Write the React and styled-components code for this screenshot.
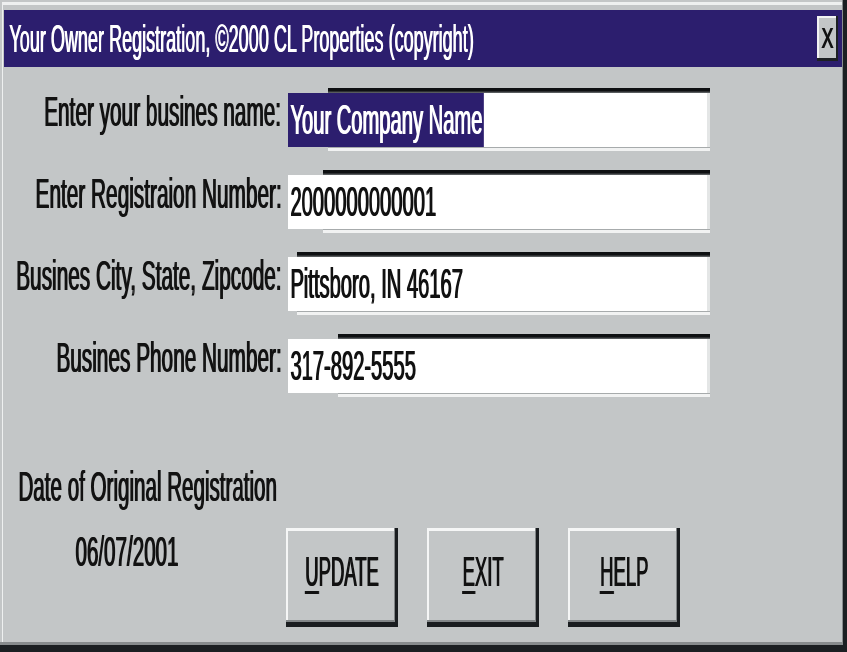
import React from 'react';
import styled, { createGlobalStyle } from 'styled-components';

const GlobalStyle = createGlobalStyle`
  html, body {
    margin: 0;
    padding: 0;
    background: #c3c6c7;
    font-family: "Liberation Sans", Arial, sans-serif;
  }
`;

const Window = styled.div`
  width: 847px;
  height: 652px;
  box-sizing: border-box;
  padding: 10px 5px 0 4px;
  background: #c3c6c7;
  box-shadow:
    inset -4px -7px 0 #1b1f22,
    inset -5px -10px 0 #878b8d,
    inset 2px 2px 0 #c3c6c7,
    inset 3px 5px 0 #eef0f0;
  overflow: hidden;
`;

const TitleBar = styled.div`
  height: 57px;
  background: #2c1e6e;
  display: flex;
  align-items: center;
  padding: 0 4px 0 5px;
`;

const TitleText = styled.span`
  flex: 1;
  min-width: 0;
  color: #fff;
  font-size: 38px;
  line-height: 1;
  white-space: nowrap;
  text-shadow: 1.5px 0 0 #fff;
  transform: scaleX(0.475);
  transform-origin: left center;
`;

const CloseButton = styled.button`
  width: 21px;
  height: 45px;
  padding: 0 0 2px 0;
  border: none;
  background: #c3c6c7;
  box-shadow:
    inset -2px -3px 0 #1e2124,
    inset 2px 2px 0 #f2f3f3;
  display: flex;
  align-items: center;
  justify-content: center;
  font-family: "Liberation Sans", Arial, sans-serif;
  font-size: 30px;
  line-height: 1;
  color: #111;
`;

const CloseGlyph = styled.span`
  display: inline-block;
  text-shadow: 1.5px 0 0 #111;
  transform: scaleX(0.6);
`;

const Form = styled.div`
  display: grid;
  grid-template-columns: 277px 419px;
  column-gap: 7px;
  row-gap: 18px;
  padding-top: 21px;
`;

const LabelCell = styled.div`
  display: flex;
  justify-content: flex-end;
  align-items: center;
  padding-bottom: 16px;
`;

const LabelText = styled.span`
  display: inline-block;
  white-space: nowrap;
  color: #121212;
  font-size: 42px;
  line-height: 1;
  text-shadow: 2px 0 0 #121212;
  transform: scaleX(0.495);
  transform-origin: right center;
`;

const Field = styled.div`
  position: relative;
  height: 54px;
  margin: 5px 0;
  background: #fff;
  box-shadow: 3px 0 0 #e4e6e6;

  &::before {
    content: '';
    position: absolute;
    left: ${p => p.$cut}px;
    right: -3px;
    top: -5px;
    height: 5px;
    background: linear-gradient(#0e1012 0 55%, #6d7173);
  }

  &::after {
    content: '';
    position: absolute;
    left: ${p => p.$cut}px;
    right: -3px;
    bottom: -5px;
    height: 5px;
    background: linear-gradient(#a7abac 0 1px, #f1f2f2 1px 4px, #c3c6c7 4px);
  }
`;

const FieldText = styled.div`
  padding-left: 4px;
  height: 54px;
  white-space: nowrap;
  color: #111;
  font-size: 42px;
  line-height: 54px;
  text-shadow: 2px 0 0 currentColor;
  transform: scaleX(0.48);
  transform-origin: left center;
`;

const Selection = styled.span`
  display: inline-block;
  margin-left: -4px;
  padding: 0 4px;
  background: #2c1e6e;
  color: #fff;
`;

const Footer = styled.div`
  display: flex;
  align-items: flex-start;
  padding-top: 67px;
`;

const DateBlock = styled.div`
  width: 282px;
  display: flex;
  flex-direction: column;
  gap: 21px;
`;

const DateText = styled.div`
  margin-left: ${p => p.$indent}px;
  height: 44px;
  white-space: nowrap;
  color: #121212;
  font-size: 42px;
  line-height: 44px;
  text-shadow: 2px 0 0 #121212;
  transform: scaleX(0.49);
  transform-origin: left center;
`;

const ButtonRow = styled.div`
  display: flex;
  gap: 29px;
  margin-top: 63px;
`;

const PushButton = styled.button`
  width: 112px;
  height: 99px;
  padding: 0 0 12px 0;
  border: none;
  background: #c3c6c7;
  box-shadow:
    inset -3px -5px 0 #1a1d20,
    inset -4px -7px 0 #828688,
    inset 2px 3px 0 #f5f6f6;
  display: flex;
  align-items: center;
  justify-content: center;
  font-family: "Liberation Sans", Arial, sans-serif;
  color: #111;
  cursor: pointer;
`;

const ButtonText = styled.span`
  display: inline-block;
  white-space: nowrap;
  font-size: 42px;
  line-height: 1;
  text-shadow: 2px 0 0 #111;
  transform: scaleX(0.44);
  transform-origin: center center;
`;

const Mnemonic = styled.span`
  text-decoration: underline;
  text-decoration-thickness: 3px;
  text-underline-offset: 5px;
`;

const rows = [
  { label: 'Enter your busines name:', value: 'Your Company Name', cut: 40, selected: true },
  { label: 'Enter Registraion Number:', value: '2000000000001', cut: 35 },
  { label: 'Busines City, State, Zipcode:', value: 'Pittsboro, IN 46167', cut: 9 },
  { label: 'Busines Phone Number:', value: '317-892-5555', cut: 50 },
];

const buttons = [
  { key: 'U', rest: 'PDATE' },
  { key: 'E', rest: 'XIT' },
  { key: 'H', rest: 'ELP' },
];

export default function App() {
  return (
    <>
      <GlobalStyle />
      <Window>
        <TitleBar>
          <TitleText>Your Owner Registration, ©2000 CL Properties (copyright)</TitleText>
          <CloseButton aria-label="Close">
            <CloseGlyph>X</CloseGlyph>
          </CloseButton>
        </TitleBar>

        <Form>
          {rows.map(row => (
            <React.Fragment key={row.label}>
              <LabelCell>
                <LabelText>{row.label}</LabelText>
              </LabelCell>
              <Field $cut={row.cut}>
                <FieldText>
                  {row.selected ? <Selection>{row.value}</Selection> : row.value}
                </FieldText>
              </Field>
            </React.Fragment>
          ))}
        </Form>

        <Footer>
          <DateBlock>
            <DateText $indent={14}>Date of Original Registration</DateText>
            <DateText $indent={71}>06/07/2001</DateText>
          </DateBlock>
          <ButtonRow>
            {buttons.map(b => (
              <PushButton key={b.key}>
                <ButtonText>
                  <Mnemonic>{b.key}</Mnemonic>
                  {b.rest}
                </ButtonText>
              </PushButton>
            ))}
          </ButtonRow>
        </Footer>
      </Window>
    </>
  );
}
